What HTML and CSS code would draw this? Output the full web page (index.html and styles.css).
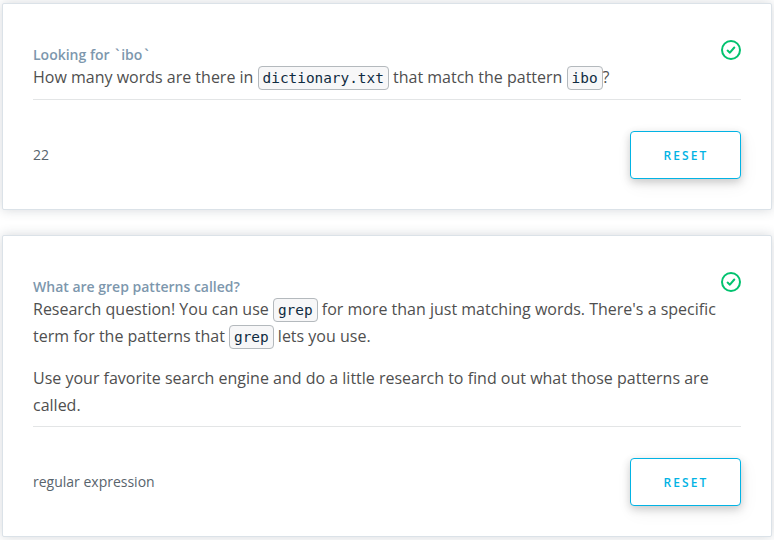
FILE: index.html
```html
<!DOCTYPE html>
<html lang="en">
<head>
<meta charset="utf-8">
<title>Quiz</title>
<link rel="stylesheet" href="styles.css">
</head>
<body>
<main class="quiz">
  <section class="card">
    <header class="head">
      <h2 class="title">Looking for <span class="tick">`</span>ibo<span class="tick">`</span></h2>
      <svg class="check" viewBox="0 0 20 20" aria-hidden="true"><circle cx="10" cy="10" r="9"/><path d="M6.6 10.6l2.3 2.1 4.4-5.2"/></svg>
    </header>
    <div class="question">
      <p>How many words are there in <code>dictionary.txt</code> that match the pattern <code>ibo</code>?</p>
    </div>
    <div class="answer"><span class="value">22</span><button class="reset">RESET</button></div>
  </section>
  <section class="card">
    <header class="head">
      <h2 class="title">What are grep patterns called?</h2>
      <svg class="check" viewBox="0 0 20 20" aria-hidden="true"><circle cx="10" cy="10" r="9"/><path d="M6.6 10.6l2.3 2.1 4.4-5.2"/></svg>
    </header>
    <div class="question">
      <p>Research question! You can use <code>grep</code> for more than just matching words. There's a specific term for the patterns that <code>grep</code> lets you use.</p>
      <p>Use your favorite search engine and do a little research to find out what those patterns are called.</p>
    </div>
    <div class="answer"><span class="value">regular expression</span><button class="reset">RESET</button></div>
  </section>
</main>
</body>
</html>
```
FILE: styles.css
```css
* { box-sizing: border-box; }
body { margin: 0; background: #fff; font-family: "Open Sans", sans-serif; color: #4f4f4f; overflow: hidden; }
.quiz { display: flex; flex-direction: column; gap: 25px; padding: 3px 2px; }
.card { border: 1px solid #dbe2e8; border-radius: 2px; padding: 36px 30px 30px; box-shadow: 0 0 12px rgba(46, 61, 73, .2); background: #fff; }
.head { display: flex; justify-content: space-between; height: 24px; }
.title { margin: 5px 0 0; font-size: 14px; line-height: 20px; font-weight: 600; color: #7d97ad; }
.tick { display: inline-block; width: 8px; text-align: center; }
.check { width: 20px; height: 20px; fill: none; stroke: #02c26f; stroke-width: 2; stroke-linecap: round; stroke-linejoin: round; }
.question { border-bottom: 1px solid #e3e5e6; padding-bottom: 8px; font-size: 16px; line-height: 27px; }
.question p { margin: 0; }
.question p + p { margin: 15px 0 -1px; }
code { font-family: "DejaVu Sans Mono", monospace; font-size: 14.4px; line-height: 0; color: #0f2b41; background: #f7f7f8; border: 1px solid #b4b9bd; border-radius: 4px; padding: 3px 4px; }
.answer { display: flex; justify-content: space-between; align-items: center; padding-top: 31px; font-size: 14px; color: #58646d; }
.value { padding-bottom: 2px; }
.reset { width: 111px; height: 48px; padding: 0 0 0 1px; border: 1px solid #02b3e4; border-radius: 4px; background: #fff; color: #02b3e4; font: 600 12px "Open Sans", sans-serif; letter-spacing: 2.1px; box-shadow: 0 3px 8px rgba(0, 0, 0, .18), 2px 6px 18px rgba(0, 0, 0, .06); }
```
